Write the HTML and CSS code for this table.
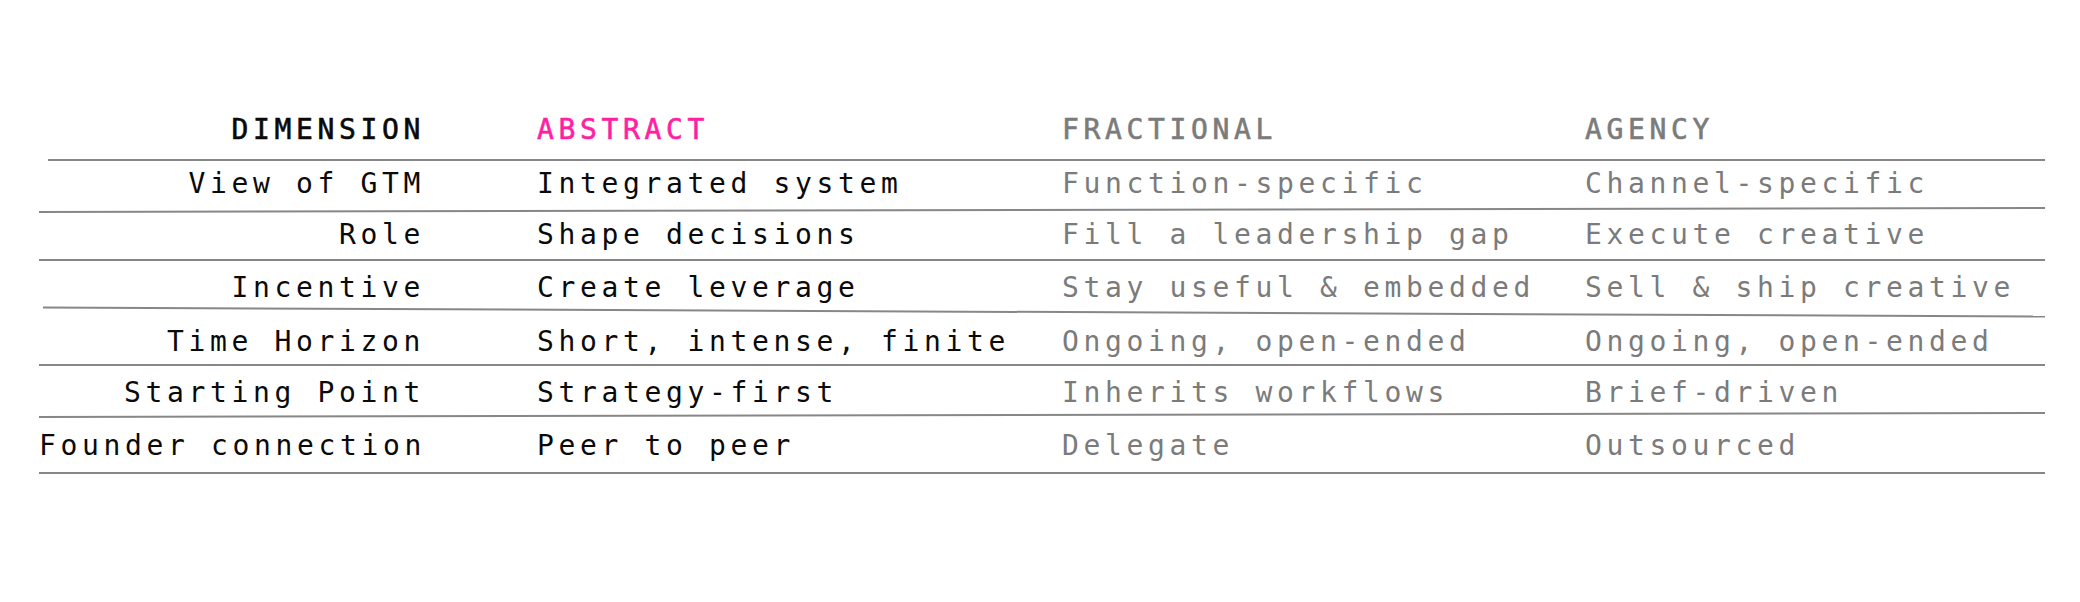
FILE: index.html
```html
<!DOCTYPE html>
<html lang="en">
<head>
<meta charset="utf-8">
<title>Comparison</title>
<link rel="stylesheet" href="styles.css">
</head>
<body>
<main class="page">
  <section class="table">
    <div class="row head">
      <div class="cell dim">DIMENSION</div>
      <div class="cell main accent">ABSTRACT</div>
      <div class="cell alt">FRACTIONAL</div>
      <div class="cell alt">AGENCY</div>
    </div>
    <div class="rule rule-short"></div>
    <div class="row h48 up1">
      <div class="cell dim">View of GTM</div>
      <div class="cell main">Integrated system</div>
      <div class="cell alt">Function-specific</div>
      <div class="cell alt">Channel-specific</div>
    </div>
    <div class="rule tilt-up"></div>
    <div class="row h48">
      <div class="cell dim">Role</div>
      <div class="cell main">Shape decisions</div>
      <div class="cell alt">Fill a leadership gap</div>
      <div class="cell alt">Execute creative</div>
    </div>
    <div class="rule"></div>
    <div class="row h50 down2">
      <div class="cell dim">Incentive</div>
      <div class="cell main">Create leverage</div>
      <div class="cell alt">Stay useful &amp; embedded</div>
      <div class="cell alt">Sell &amp; ship creative</div>
    </div>
    <div class="rule tilt-down"></div>
    <div class="row h51 down3">
      <div class="cell dim">Time Horizon</div>
      <div class="cell main">Short, intense, finite</div>
      <div class="cell alt">Ongoing, open-ended</div>
      <div class="cell alt">Ongoing, open-ended</div>
    </div>
    <div class="rule"></div>
    <div class="row h48 down3">
      <div class="cell dim">Starting Point</div>
      <div class="cell main">Strategy-first</div>
      <div class="cell alt">Inherits workflows</div>
      <div class="cell alt">Brief-driven</div>
    </div>
    <div class="rule tilt-up"></div>
    <div class="row h56 down2">
      <div class="cell dim">Founder connection</div>
      <div class="cell main">Peer to peer</div>
      <div class="cell alt">Delegate</div>
      <div class="cell alt">Outsourced</div>
    </div>
    <div class="rule"></div>
  </section>
</main>
</body>
</html>
```

FILE: styles.css
```css
html, body {
  margin: 0;
  padding: 0;
  background: #ffffff;
}

.page {
  width: 2080px;
  height: 602px;
  overflow: hidden;
}

.table {
  display: flex;
  flex-direction: column;
  width: 2006px;
  margin-left: 39px;
  padding-top: 114px;
  font-family: "DejaVu Sans Mono", "Liberation Mono", monospace;
  font-size: 28px;
  line-height: 32px;
  letter-spacing: 4.64px;
  color: #0a0a0a;
}

.row {
  display: grid;
  grid-template-columns: 390px 525px 523px 1fr;
  align-items: center;
}

.row.head {
  height: 45px;
  align-items: start;
  -webkit-text-stroke: 0.6px currentColor;
}

.row.h48 { height: 48px; }
.row.h50 { height: 50px; }
.row.h51 { height: 51px; }
.row.h56 { height: 56px; }

.row.up1 .cell { padding-bottom: 2px; }
.row.down2 .cell { padding-top: 4px; }
.row.down3 .cell { padding-top: 6px; }

.cell {
  white-space: nowrap;
}

.cell.dim {
  text-align: right;
  padding-right: 4px;
}

.cell.main,
.cell.alt {
  padding-left: 108px;
}

.cell.alt {
  color: #7b7b7b;
}

.cell.accent {
  color: #ff1fa2;
}

.rule {
  height: 2px;
  background: #878787;
  flex: none;
}

.rule.rule-short {
  margin-left: 9px;
}

.rule.tilt-up {
  transform: rotate(-0.114deg);
}

.rule.tilt-down {
  margin-left: 4px;
  transform: rotate(0.257deg);
}
```
